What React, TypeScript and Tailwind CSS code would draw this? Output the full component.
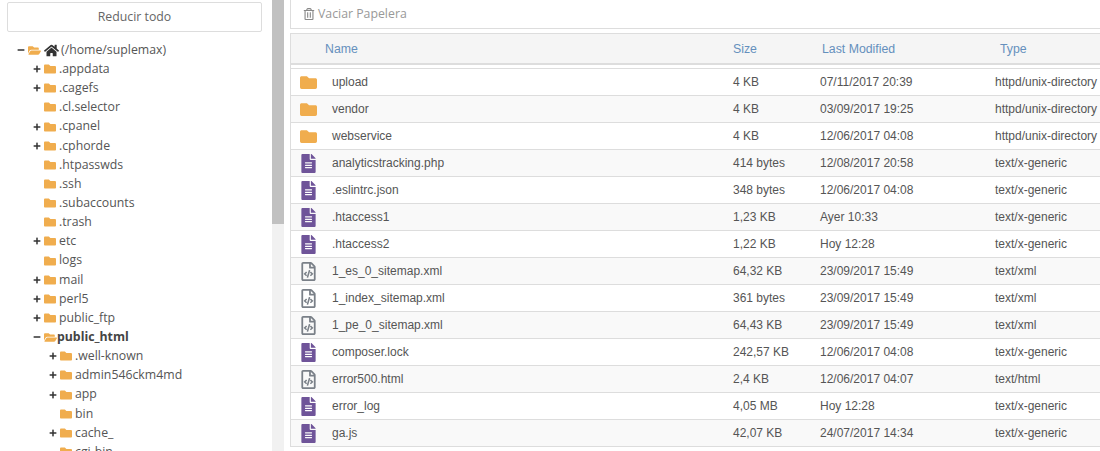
import React from 'react';
import { FaFolder, FaFolderOpen, FaHome, FaPlus, FaMinus, FaFileAlt, FaRegFileCode, FaRegTrashAlt } from 'react-icons/fa';

type TreeNode = { name: string; depth: number; toggle?: '+' | '-'; bold?: boolean; home?: boolean };

const tree: TreeNode[] = [
  { name: '(/home/suplemax)', depth: 0, toggle: '-', home: true },
  { name: '.appdata', depth: 1, toggle: '+' },
  { name: '.cagefs', depth: 1, toggle: '+' },
  { name: '.cl.selector', depth: 1 },
  { name: '.cpanel', depth: 1, toggle: '+' },
  { name: '.cphorde', depth: 1, toggle: '+' },
  { name: '.htpasswds', depth: 1 },
  { name: '.ssh', depth: 1 },
  { name: '.subaccounts', depth: 1 },
  { name: '.trash', depth: 1 },
  { name: 'etc', depth: 1, toggle: '+' },
  { name: 'logs', depth: 1 },
  { name: 'mail', depth: 1, toggle: '+' },
  { name: 'perl5', depth: 1, toggle: '+' },
  { name: 'public_ftp', depth: 1, toggle: '+' },
  { name: 'public_html', depth: 1, toggle: '-', bold: true },
  { name: '.well-known', depth: 2, toggle: '+' },
  { name: 'admin546ckm4md', depth: 2, toggle: '+' },
  { name: 'app', depth: 2, toggle: '+' },
  { name: 'bin', depth: 2 },
  { name: 'cache_', depth: 2, toggle: '+' },
  { name: 'cgi-bin', depth: 2 },
];

type FileRow = { name: string; size: string; modified: string; type: string; kind: 'dir' | 'doc' | 'code' };

const files: FileRow[] = [
  { name: 'upload', size: '4 KB', modified: '07/11/2017 20:39', type: 'httpd/unix-directory', kind: 'dir' },
  { name: 'vendor', size: '4 KB', modified: '03/09/2017 19:25', type: 'httpd/unix-directory', kind: 'dir' },
  { name: 'webservice', size: '4 KB', modified: '12/06/2017 04:08', type: 'httpd/unix-directory', kind: 'dir' },
  { name: 'analyticstracking.php', size: '414 bytes', modified: '12/08/2017 20:58', type: 'text/x-generic', kind: 'doc' },
  { name: '.eslintrc.json', size: '348 bytes', modified: '12/06/2017 04:08', type: 'text/x-generic', kind: 'doc' },
  { name: '.htaccess1', size: '1,23 KB', modified: 'Ayer 10:33', type: 'text/x-generic', kind: 'doc' },
  { name: '.htaccess2', size: '1,22 KB', modified: 'Hoy 12:28', type: 'text/x-generic', kind: 'doc' },
  { name: '1_es_0_sitemap.xml', size: '64,32 KB', modified: '23/09/2017 15:49', type: 'text/xml', kind: 'code' },
  { name: '1_index_sitemap.xml', size: '361 bytes', modified: '23/09/2017 15:49', type: 'text/xml', kind: 'code' },
  { name: '1_pe_0_sitemap.xml', size: '64,43 KB', modified: '23/09/2017 15:49', type: 'text/xml', kind: 'code' },
  { name: 'composer.lock', size: '242,57 KB', modified: '12/06/2017 04:08', type: 'text/x-generic', kind: 'doc' },
  { name: 'error500.html', size: '2,4 KB', modified: '12/06/2017 04:07', type: 'text/html', kind: 'code' },
  { name: 'error_log', size: '4,05 MB', modified: 'Hoy 12:28', type: 'text/x-generic', kind: 'doc' },
  { name: 'ga.js', size: '42,07 KB', modified: '24/07/2017 14:34', type: 'text/x-generic', kind: 'doc' },
];

const FileIcon = ({ kind }: { kind: FileRow['kind'] }) => {
  if (kind === 'dir') return <FaFolder className="text-[#f0ad4e]" size={17} />;
  if (kind === 'doc') return <FaFileAlt className="text-[#6f5499]" size={19} />;
  return <FaRegFileCode className="text-[#7a8088]" size={19} />;
};

const App: React.FC = () => {
  return (
    <div className="flex h-[451px] w-[1100px] overflow-hidden bg-white font-['Liberation_Sans',sans-serif]">
      <aside className="w-[272px] shrink-0 overflow-hidden font-['Open_Sans',sans-serif] text-[12.3px] text-[#555]">
        <div className="ml-[7px] mr-[10px] mt-[2px] flex h-[30px] items-center justify-center rounded-[2px] border border-[#ddd] text-[#666]">
          Reducir todo
        </div>
        <ul className="mt-[8.5px]">
          {tree.map(node => (
            <li
              key={node.name}
              className={`flex h-[19.15px] items-center ${node.depth === 0 ? 'pl-[17px]' : node.depth === 1 ? 'pl-[33px]' : 'pl-[49px]'}`}
            >
              <span className="flex w-[11px] shrink-0 items-center text-[#333]">
                {node.toggle === '+' && <FaPlus size={8} />}
                {node.toggle === '-' && <FaMinus size={8} />}
              </span>
              {node.toggle === '-' ? (
                <FaFolderOpen className="shrink-0 text-[#f0ad4e]" size={13} />
              ) : (
                <FaFolder className="mr-[3px] shrink-0 text-[#f0ad4e]" size={12} />
              )}
              {node.home && <FaHome className="ml-[3px] mr-[2px] shrink-0 text-[#333]" size={15} />}
              <span className={node.bold ? 'font-bold text-[#444]' : ''}>{node.name}</span>
            </li>
          ))}
        </ul>
      </aside>

      <div className="flex w-[12px] shrink-0 flex-col bg-[#f1f1f1]">
        <div className="h-[224px] bg-[#c1c1c1]" />
      </div>

      <main className="ml-[6px] min-w-0 flex-1">
        <div className="flex h-[29px] items-center gap-[3px] border-b border-l border-[#ddd] pl-[12px] font-['Open_Sans',sans-serif] text-[12.3px] text-[#999]">
          <FaRegTrashAlt size={12} className="text-[#888]" />
          Vaciar Papelera
        </div>

        <div className="mt-[4px] border-l border-t border-[#ddd] text-[12px] text-[#555]">
          <div className="grid h-[31px] grid-cols-[442px_89px_178px_1fr] items-center border-b-2 border-[#ddd] bg-[#f5f5f5] pt-[1px] text-[12.3px] text-[#6590bd]">
            <span className="pl-[34px]">Name</span>
            <span>Size</span>
            <span>Last Modified</span>
            <span>Type</span>
          </div>
          <div className="mt-[3px] border-t border-[#ddd]">
            {files.map((file, i) => (
              <div
                key={file.name}
                className={`grid h-[27px] grid-cols-[442px_87px_175px_1fr] items-center border-b border-[#ddd] ${i % 2 === 1 ? 'bg-[#f9f9f9]' : 'bg-white'}`}
              >
                <span className="flex items-center">
                  <span className="flex w-[41px] shrink-0 justify-center pr-[6px]">
                    <FileIcon kind={file.kind} />
                  </span>
                  {file.name}
                </span>
                <span>{file.size}</span>
                <span>{file.modified}</span>
                <span className="whitespace-nowrap">{file.type}</span>
              </div>
            ))}
          </div>
        </div>
      </main>
    </div>
  );
};

export default App;
